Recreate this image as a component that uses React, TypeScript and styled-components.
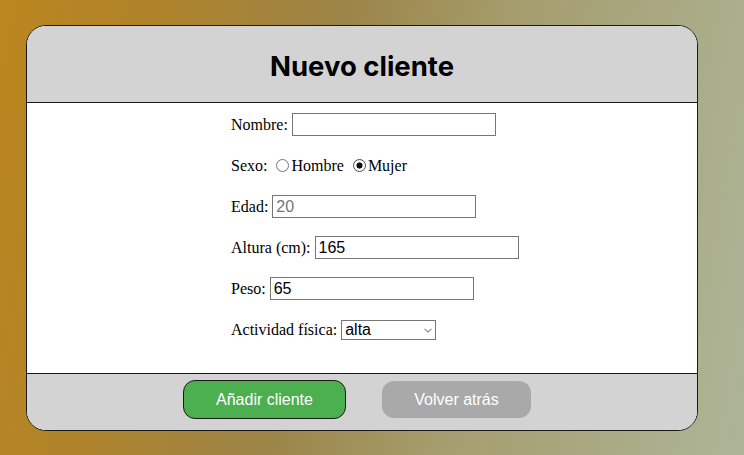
import styled, { createGlobalStyle } from 'styled-components';

const GlobalStyle = createGlobalStyle`
  html, body {
    margin: 0;
    padding: 0;
  }
  body {
    width: 744px;
    height: 455px;
    overflow: hidden;
    background: linear-gradient(100deg, #bb861e 0%, #b0832a 18%, #9b8447 42%, #a59c6c 62%, #adb598 100%);
    font-family: 'Liberation Serif', 'Times New Roman', serif;
    font-size: 16px;
    color: #000;
  }
`;

export default function App(): JSX.Element {
  return (
    <>
      <GlobalStyle />
      <Page>
        <Card>
          <Header>
            <Title>Nuevo cliente</Title>
          </Header>
          <FormBody>
            <Row>
              <Label htmlFor="nombre">Nombre:</Label>
              <TextInput id="nombre" type="text" />
            </Row>
            <Row>
              <Label as="span">Sexo: </Label>
              <RadioLabel>
                <Radio type="radio" name="sexo" value="hombre" />
                Hombre
              </RadioLabel>
              <RadioLabel>
                <Radio type="radio" name="sexo" value="mujer" defaultChecked />
                Mujer
              </RadioLabel>
            </Row>
            <Row>
              <Label htmlFor="edad">Edad:</Label>
              <TextInput id="edad" type="text" placeholder="20" />
            </Row>
            <Row>
              <Label htmlFor="altura">Altura (cm):</Label>
              <TextInput id="altura" type="text" defaultValue="165" />
            </Row>
            <Row>
              <Label htmlFor="peso">Peso:</Label>
              <TextInput id="peso" type="text" defaultValue="65" />
            </Row>
            <Row>
              <Label htmlFor="actividad">Actividad física:</Label>
              <SelectWrap>
                <Select id="actividad" defaultValue="alta">
                  <option value="baja">baja</option>
                  <option value="media">media</option>
                  <option value="alta">alta</option>
                </Select>
                <Chevron viewBox="0 0 8 5" aria-hidden="true">
                  <path d="M0.5 0.8 L4 4 L7.5 0.8" fill="none" stroke="#8a8a8a" strokeWidth="1.1" />
                </Chevron>
              </SelectWrap>
            </Row>
          </FormBody>
          <Footer>
            <Button $variant="primary">Añadir cliente</Button>
            <Button $variant="secondary">Volver atrás</Button>
          </Footer>
        </Card>
      </Page>
    </>
  );
}

const Page = styled.div`
  padding: 25px 0 0 26px;
`;

const Card = styled.div`
  width: 670px;
  border: 1px solid #1a1a1a;
  border-radius: 20px;
  overflow: hidden;
  background: #fff;
`;

const Header = styled.div`
  height: 77px;
  box-sizing: border-box;
  padding-top: 4px;
  background: #d3d3d3;
  border-bottom: 1px solid #1a1a1a;
  display: flex;
  align-items: center;
  justify-content: center;
`;

const Title = styled.h1`
  margin: 0;
  font-family: Inter, 'Noto Sans', sans-serif;
  font-weight: 700;
  font-size: 27.5px;
  color: #000;
`;

const FormBody = styled.div`
  height: 270px;
  box-sizing: border-box;
  padding: 10px 0 0 204px;
  display: flex;
  flex-direction: column;
  gap: 18px;
`;

const Row = styled.div`
  height: 23px;
  display: flex;
  align-items: center;
  white-space: nowrap;
`;

const Label = styled.label`
  margin-right: 4px;
`;

const RadioLabel = styled.label`
  display: inline-flex;
  align-items: center;
  margin-right: 4px;
`;

const Radio = styled.input`
  appearance: none;
  box-sizing: border-box;
  width: 13px;
  height: 13px;
  margin: 0 2px 0 5px;
  border: 1px solid #767676;
  border-radius: 50%;
  background: #fff;
  &:checked {
    border-color: #4a4a4a;
    background: radial-gradient(circle, #111 0 2.8px, #fff 3.3px);
  }
`;

const TextInput = styled.input`
  width: 204px;
  height: 23px;
  box-sizing: border-box;
  padding: 1px 3px;
  border: 1px solid #767676;
  font-family: 'Liberation Sans', Arial, sans-serif;
  font-size: 16px;
  color: #000;
  &::placeholder {
    color: #757575;
  }
`;

const SelectWrap = styled.span`
  position: relative;
  display: inline-flex;
`;

const Select = styled.select`
  appearance: none;
  width: 95px;
  height: 20px;
  box-sizing: border-box;
  border: 1px solid #767676;
  border-radius: 0;
  background: #fff;
  font-family: 'Liberation Sans', Arial, sans-serif;
  font-size: 16px;
  color: #000;
  padding: 0 0 0 3px;
`;

const Chevron = styled.svg`
  position: absolute;
  right: 4px;
  top: 8px;
  width: 8px;
  height: 5px;
  pointer-events: none;
`;

const Footer = styled.div`
  height: 57px;
  box-sizing: border-box;
  padding: 0 10px 5px 0;
  background: #d3d3d3;
  border-top: 1px solid #1a1a1a;
  display: flex;
  align-items: center;
  justify-content: center;
  gap: 36px;
`;

const Button = styled.button<{ $variant: 'primary' | 'secondary' }>`
  height: ${({ $variant }) => ($variant === 'primary' ? '39px' : '37px')};
  width: ${({ $variant }) => ($variant === 'primary' ? '163px' : '149px')};
  border-radius: 12px;
  border: ${({ $variant }) =>
    $variant === 'primary' ? '1px solid #1a1a1a' : 'none'};
  background: ${({ $variant }) =>
    $variant === 'primary' ? '#4caf50' : '#a9a9a9'};
  color: #fff;
  font-family: 'Liberation Sans', Arial, sans-serif;
  font-size: 16px;
  cursor: pointer;
`;
